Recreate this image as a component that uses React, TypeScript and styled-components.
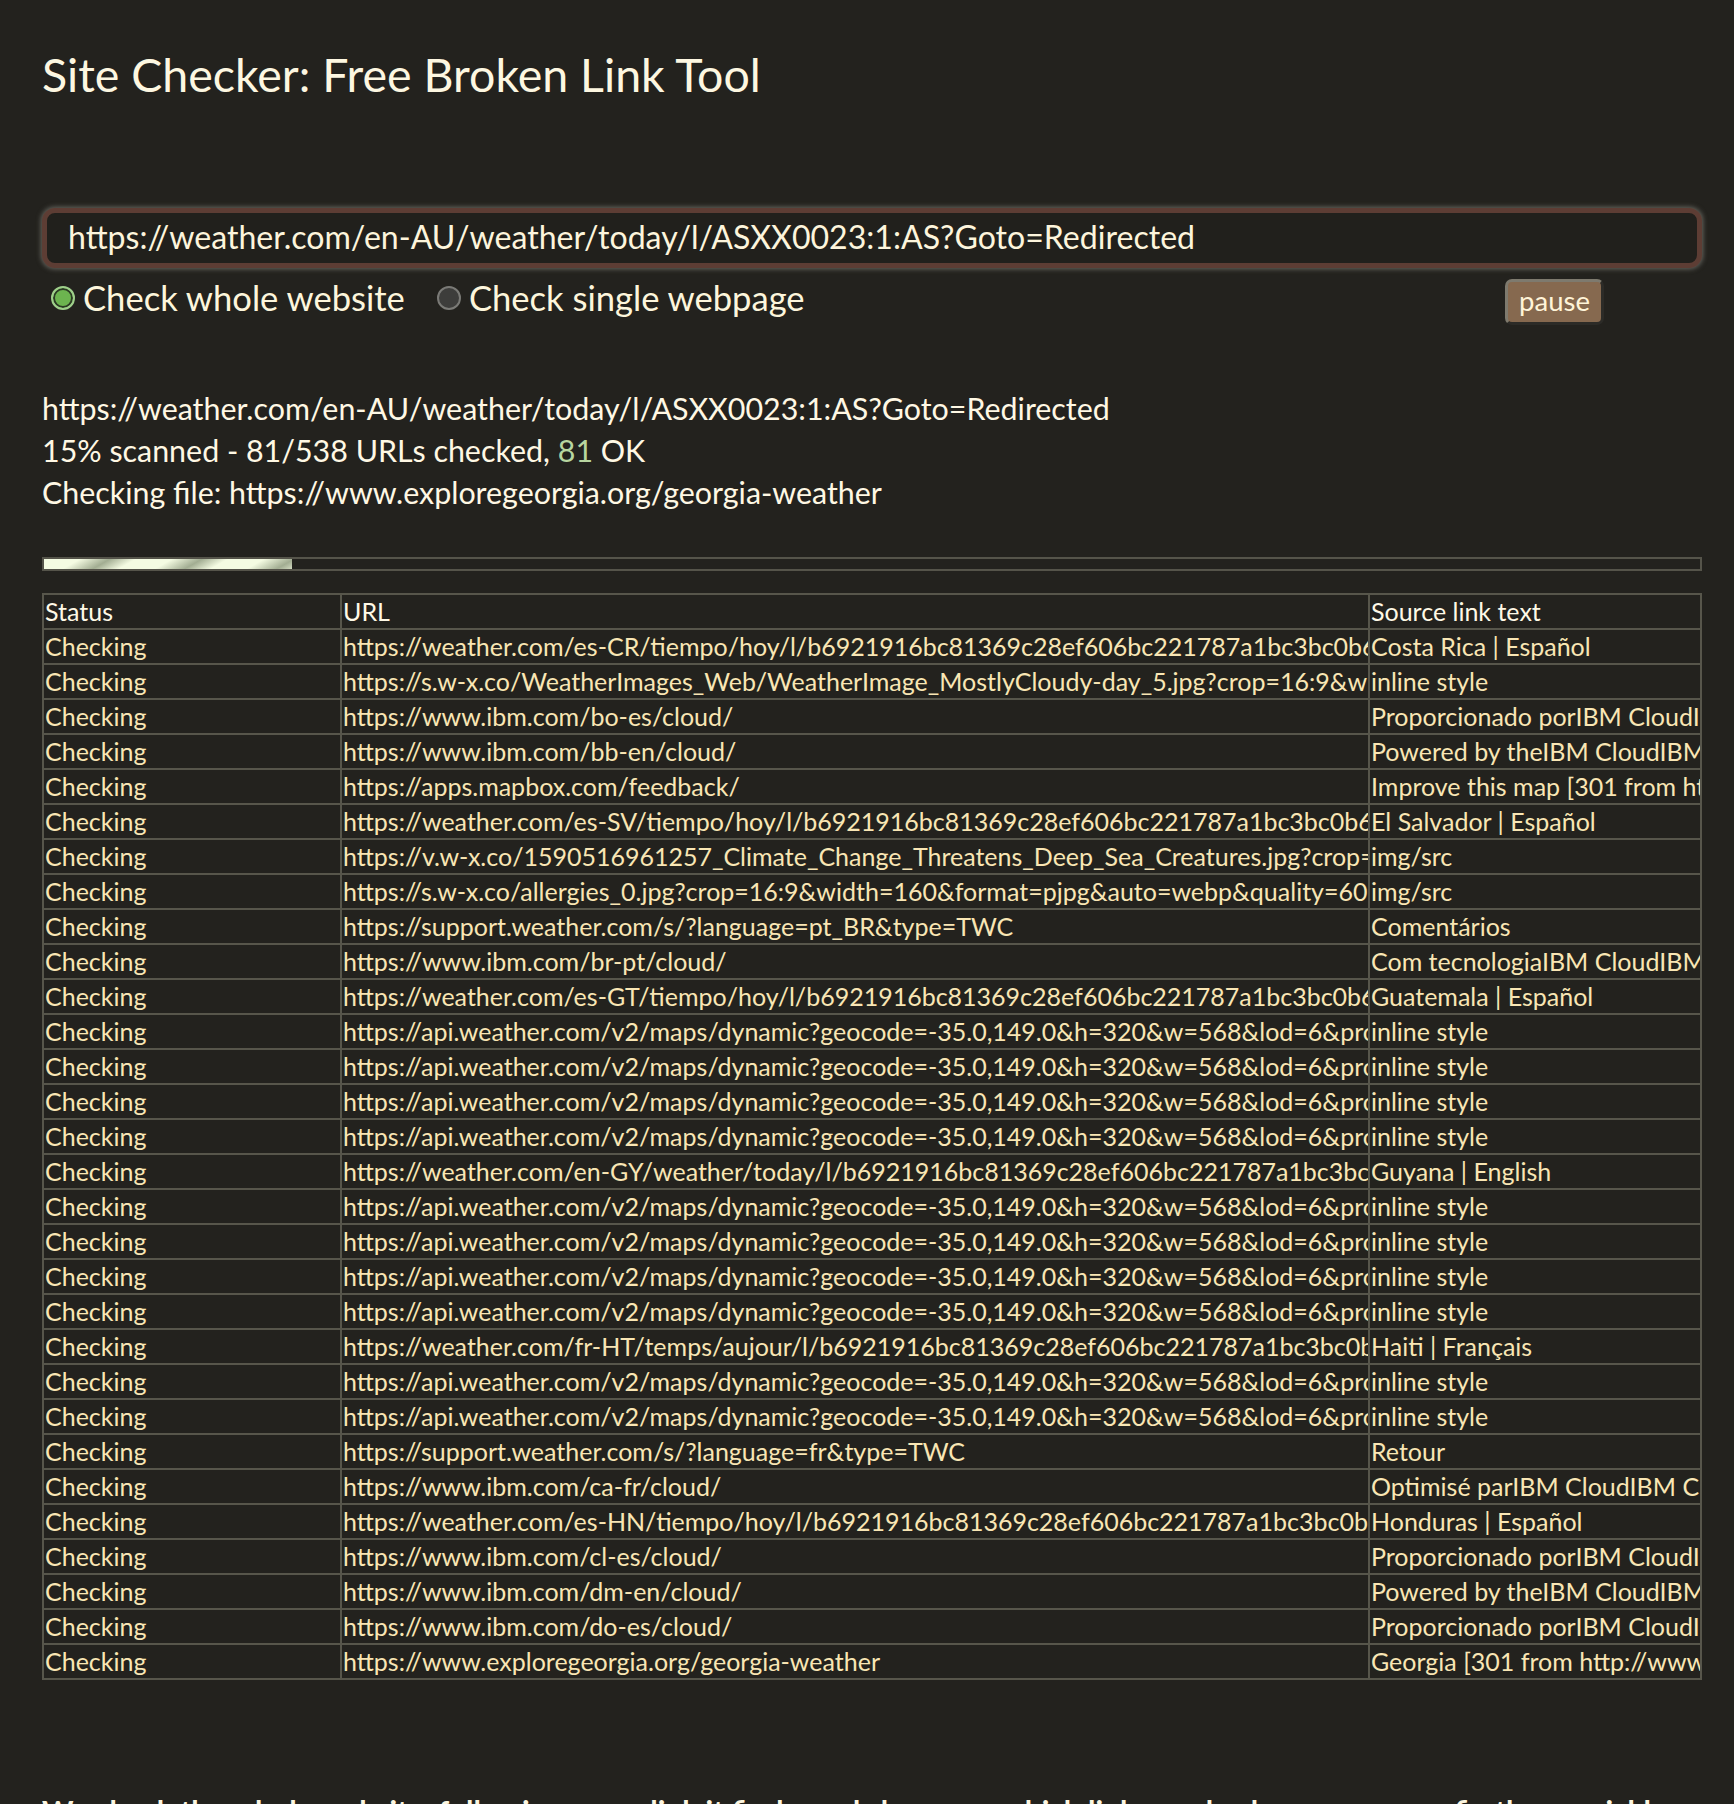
import React from "react";
import styled, { createGlobalStyle } from "styled-components";

const GlobalStyle = createGlobalStyle`
  html, body { margin: 0; padding: 0; background: #23221e; }
  body { font-family: Lato, "Open Sans", sans-serif; color: #fdf6e0; }
`;

const Page = styled.div`
  padding: 47px 32px 0 42px;
  min-height: 1804px;
  box-sizing: border-box;
`;

const Title = styled.h1`
  margin: 0;
  font-size: 46.5px;
  line-height: 1.2;
  font-weight: 400;
  color: #fdf7e1;
`;

const UrlInput = styled.input`
  display: block;
  box-sizing: border-box;
  width: 100%;
  height: 60px;
  margin: 105px 0 0;
  padding: 0 0 2px 21px;
  border: 5px solid #5d3d34;
  border-radius: 13px;
  box-shadow: 0 0 5px 1px rgba(150, 150, 140, 0.6);
  background: #21201c;
  color: #fdf5dc;
  font-family: Lato, sans-serif;
  font-size: 32.1px;
  outline: none;
`;

const OptionsRow = styled.div`
  display: flex;
  align-items: flex-start;
  margin-top: 10px;
  padding-left: 9px;
`;

const RadioLabel = styled.label`
  display: flex;
  align-items: center;
  height: 40px;
  margin-right: 32px;
  font-size: 34.6px;
  line-height: 40px;
  color: #fdf6dc;
  cursor: pointer;
`;

const Radio = styled.input.attrs({ type: "radio" })`
  appearance: none;
  -webkit-appearance: none;
  box-sizing: border-box;
  width: 24px;
  height: 24px;
  margin: 0 8px 0 0;
  border-radius: 50%;
  border: 2px solid #7a7a76;
  background: #3d3d3b;
  &:checked {
    border-color: #9fcf8b;
    background: #6cb44f;
    box-shadow: inset 0 0 0 2px #2b3a24;
  }
`;

const PauseButton = styled.button`
  margin: 1px 98px 0 auto;
  width: 99px;
  height: 46px;
  box-sizing: border-box;
  border-radius: 7px;
  border: 3px solid;
  border-color: #7e7a6e #2c2b27 #2c2b27 #7e7a6e;
  background: #86694f;
  color: #fff4d8;
  font-family: Lato, sans-serif;
  font-size: 27.5px;
  line-height: 1;
  padding: 0 0 3px;
`;

const StatusBlock = styled.div`
  margin-top: 62px;
  font-size: 30.4px;
  line-height: 42px;
  color: #fff8e4;
`;

const OkCount = styled.span`
  color: #b8d6a0;
`;

const ProgressTrack = styled.div`
  margin-top: 44px;
  height: 14px;
  box-sizing: border-box;
  border: 2px solid #55544a;
  background: #23221e;
`;

const ProgressFill = styled.div`
  height: 100%;
  background: repeating-linear-gradient(
    150deg,
    #f4fbe2 0px,
    #f4fbe2 18px,
    #a2ad92 33px,
    #f4fbe2 46px
  );
`;

const Table = styled.table`
  margin-top: 22px;
  width: 100%;
  table-layout: fixed;
  border-collapse: collapse;
  border: 2px solid #57564b;
  font-size: 25px;
`;

const Row = styled.tr``;

const Cell = styled.td<{ $head?: boolean }>`
  height: 33px;
  padding: 0 0 0 1px;
  border: 2px solid #57564b;
  line-height: 33px;
  white-space: nowrap;
  overflow: hidden;
  text-overflow: clip;
  color: ${(p) => (p.$head ? "#fff9e6" : "#f9e6b4")};
  text-align: left;
  font-weight: 400;
  vertical-align: middle;
`;

const Footer = styled.p`
  margin: 113px 0 0;
  font-size: 30px;
  font-weight: 700;
  line-height: 1.2;
  white-space: nowrap;
  overflow: hidden;
  color: #fdf6e0;
`;

const api =
  "https://api.weather.com/v2/maps/dynamic?geocode=-35.0,149.0&h=320&w=568&lod=6&product=satrad&map=light&format=jpg&language=en-AU&apiKey=";
const hash = "b6921916bc81369c28ef606bc221787a1bc3bc0b66ffc3e3b1cd1e8d34ed1b34";

const rows: [string, string][] = [
  [`https://weather.com/es-CR/tiempo/hoy/l/${hash}`, "Costa Rica | Español"],
  ["https://s.w-x.co/WeatherImages_Web/WeatherImage_MostlyCloudy-day_5.jpg?crop=16:9&width=980&format=pjpg", "inline style"],
  ["https://www.ibm.com/bo-es/cloud/", "Proporcionado porIBM CloudIBM Cloud"],
  ["https://www.ibm.com/bb-en/cloud/", "Powered by theIBM CloudIBM Cloud"],
  ["https://apps.mapbox.com/feedback/", "Improve this map [301 from https://www.mapbox.com/map-feedback/]"],
  [`https://weather.com/es-SV/tiempo/hoy/l/${hash}`, "El Salvador | Español"],
  ["https://v.w-x.co/1590516961257_Climate_Change_Threatens_Deep_Sea_Creatures.jpg?crop=16:9&width=160", "img/src"],
  ["https://s.w-x.co/allergies_0.jpg?crop=16:9&width=160&format=pjpg&auto=webp&quality=60", "img/src"],
  ["https://support.weather.com/s/?language=pt_BR&type=TWC", "Comentários"],
  ["https://www.ibm.com/br-pt/cloud/", "Com tecnologiaIBM CloudIBM Cloud"],
  [`https://weather.com/es-GT/tiempo/hoy/l/${hash}`, "Guatemala | Español"],
  [api, "inline style"],
  [api, "inline style"],
  [api, "inline style"],
  [api, "inline style"],
  [`https://weather.com/en-GY/weather/today/l/${hash}`, "Guyana | English"],
  [api, "inline style"],
  [api, "inline style"],
  [api, "inline style"],
  [api, "inline style"],
  [`https://weather.com/fr-HT/temps/aujour/l/${hash}`, "Haiti | Français"],
  [api, "inline style"],
  [api, "inline style"],
  ["https://support.weather.com/s/?language=fr&type=TWC", "Retour"],
  ["https://www.ibm.com/ca-fr/cloud/", "Optimisé parIBM CloudIBM Cloud"],
  [`https://weather.com/es-HN/tiempo/hoy/l/${hash}`, "Honduras | Español"],
  ["https://www.ibm.com/cl-es/cloud/", "Proporcionado porIBM CloudIBM Cloud"],
  ["https://www.ibm.com/dm-en/cloud/", "Powered by theIBM CloudIBM Cloud"],
  ["https://www.ibm.com/do-es/cloud/", "Proporcionado porIBM CloudIBM Cloud"],
  ["https://www.exploregeorgia.org/georgia-weather", "Georgia [301 from http://www.exploregeorgia.org/georgia-weather]"],
];

const target = "https://weather.com/en-AU/weather/today/l/ASXX0023:1:AS?Goto=Redirected";

export default function App() {
  const progress = 15;
  return (
    <>
      <GlobalStyle />
      <Page>
        <Title>Site Checker: Free Broken Link Tool</Title>
        <UrlInput type="text" defaultValue={target} />
        <OptionsRow>
          <RadioLabel>
            <Radio name="mode" defaultChecked />
            Check whole website
          </RadioLabel>
          <RadioLabel>
            <Radio name="mode" />
            Check single webpage
          </RadioLabel>
          <PauseButton>pause</PauseButton>
        </OptionsRow>
        <StatusBlock>
          <div>{target}</div>
          <div>
            15% scanned - 81/538 URLs checked, <OkCount>81</OkCount> OK
          </div>
          <div>Checking file: https://www.exploregeorgia.org/georgia-weather</div>
        </StatusBlock>
        <ProgressTrack>
          <ProgressFill style={{ width: `${progress}%` }} />
        </ProgressTrack>
        <Table>
          <colgroup>
            <col style={{ width: 298 }} />
            <col style={{ width: 1028 }} />
            <col />
          </colgroup>
          <thead>
            <Row>
              <Cell as="th" $head>Status</Cell>
              <Cell as="th" $head>URL</Cell>
              <Cell as="th" $head>Source link text</Cell>
            </Row>
          </thead>
          <tbody>
            {rows.map(([url, src], i) => (
              <Row key={i}>
                <Cell>Checking</Cell>
                <Cell>{url}</Cell>
                <Cell>{src}</Cell>
              </Row>
            ))}
          </tbody>
        </Table>
        <Footer>
          We check the whole website, following every link it finds, and show you which links are broken so you can fix them quickly.
        </Footer>
      </Page>
    </>
  );
}
